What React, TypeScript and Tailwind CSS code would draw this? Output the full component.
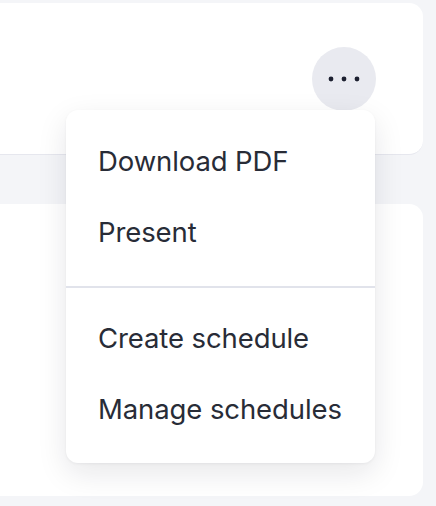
import React from 'react';

const items = [['Download PDF', 'Present'], ['Create schedule', 'Manage schedules']];

const App: React.FC = () => {
  return (
    <div className="relative h-[506px] w-[436px] overflow-hidden bg-[#f4f5f8] font-['Inter',sans-serif]">
      <div className="flex flex-col pt-[3px] pr-[13px]">
        {/* Header card */}
        <div className="-ml-5 flex h-[152px] items-center justify-end rounded-[14px] border-b border-[#e6e7ee] bg-white pr-[47px]">
          <button className="flex h-[64px] w-[64px] items-center justify-center rounded-full bg-[#e9eaf0]">
            <svg width="32" height="6" viewBox="0 0 32 6">
              <circle cx="3" cy="3" r="2.4" fill="#1d2030" />
              <circle cx="16" cy="3" r="2.4" fill="#1d2030" />
              <circle cx="29" cy="3" r="2.4" fill="#1d2030" />
            </svg>
          </button>
        </div>

        {/* Body card */}
        <div className="-ml-5 mt-[49px] h-[292px] rounded-[14px] bg-white" />
      </div>

      {/* Dropdown menu */}
      <div className="absolute left-[66px] top-[110px] w-[309px] rounded-[12px] bg-white pt-[16px] pb-[18px] shadow-[0_10px_30px_rgba(20,24,40,0.10),0_1px_3px_rgba(20,24,40,0.05)]">
        {items.map((group, gi) => (
          <div key={gi}>
            {gi > 0 && <div className="mt-[18px] mb-[15px] h-[2px] bg-[#e1e3eb]" />}
            {group.map((label) => (
              <div
                key={label}
                className="flex h-[71px] items-center pl-[32px] text-[27.5px] leading-none tracking-[-0.1px] text-[#282c37]"
              >
                {label}
              </div>
            ))}
          </div>
        ))}
      </div>
    </div>
  );
};

export default App;
